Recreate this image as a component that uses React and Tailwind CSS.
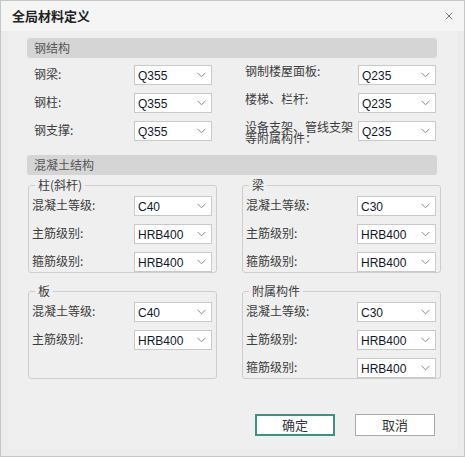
import { X } from "lucide-react"

const cjk = { fontFamily: '"Noto Sans CJK SC", "Noto Sans", sans-serif' }
const val = { fontFamily: '"Liberation Sans", "Noto Sans CJK SC", sans-serif' }

const Select = ({ value, w = "w-[78px]" }) => (
  <div className={`${w} h-[20px] bg-white border border-[#c9c9c9] flex items-center justify-between pl-[3px] pr-[5px] shrink-0`}>
    <span className="text-[12px] leading-none text-[#111827] pt-[2px]" style={val}>{value}</span>
    <svg width="9" height="6" viewBox="0 0 9 6" fill="none">
      <path d="M0.5 0.8 L4.5 4.8 L8.5 0.8" stroke="#8a8a8a" strokeWidth="1" />
    </svg>
  </div>
)

const Row = ({ label, value, lw, sw }) => (
  <div className="flex items-start h-[20px]">
    <div className={`${lw} text-[12px] leading-[15px] text-[#3c3c3c] pt-[1px]`}>{label}</div>
    <Select value={value} w={sw} />
  </div>
)

const SectionHeader = ({ title }) => (
  <div className="w-[410px] h-[20px] rounded-[3px] bg-[#d5d5d5] flex items-center pl-[7px] text-[12px] text-[#555]">
    {title}
  </div>
)

const Group = ({ title, rows, wide }) => (
  <fieldset
    className={`${wide ? "w-[199px]" : "w-[189px]"} border border-[#cdcdcd] rounded-[3px] pl-[3px] pr-[4px] pt-[4px] flex flex-col gap-[8px]`}
  >
    <legend className="ml-[3px] px-[3px] text-[12px] leading-[14px] h-[14px] text-[#3c3c3c]">{title}</legend>
    {rows.map(([l, v]) => (
      <Row key={l} label={l} value={v} lw={wide ? "w-[111px]" : "w-[102px]"} sw={wide ? "w-[79px]" : "w-[78px]"} />
    ))}
  </fieldset>
)

const steel = [
  ["钢梁:", "Q355", "钢制楼屋面板:", "Q235"],
  ["钢柱:", "Q355", "楼梯、栏杆:", "Q235"],
  ["钢支撑:", "Q355", "设备支架、管线支架等附属构件：", "Q235"],
]

export default function App() {
  return (
    <div className="w-[465px] h-[457px] border border-[#c6c6c6] bg-[#ececec] flex flex-col" style={cjk}>
      <div className="h-[30px] bg-[#f5f5f5] flex items-center justify-between pl-[11px] pr-[9px]">
        <span className="text-[13px] font-bold text-[#222]">全局材料定义</span>
        <X size={12} strokeWidth={1.8} color="#666" />
      </div>

      <div className="ml-[7px] w-[449px] h-[418px] bg-[#efefef] pt-[7px]">
        <div className="pl-[19px]">
          <SectionHeader title="钢结构" />
          <div className="pl-[7px] mt-[7px] flex flex-col gap-[8px]">
            {steel.map(([l1, v1, l2, v2]) => (
              <div key={l1} className="flex items-start h-[20px]">
                <div className="w-[100px] text-[12px] leading-[15px] text-[#3c3c3c] pt-[1px]">{l1}</div>
                <Select value={v1} />
                <div className="w-[112px] ml-[33px] mr-[1px] text-[12px] leading-[11px] text-[#3c3c3c] pt-0">{l2}</div>
                <Select value={v2} />
              </div>
            ))}
          </div>

          <div className="mt-[14px]">
            <SectionHeader title="混凝土结构" />
          </div>
        </div>

        <div className="pl-[20px] mt-[3px] flex gap-[25px]">
          <Group
            title="柱(斜杆)"
            rows={[["混凝土等级:", "C40"], ["主筋级别:", "HRB400"], ["箍筋级别:", "HRB400"]]}
          />
          <Group
            wide
            title="梁"
            rows={[["混凝土等级:", "C30"], ["主筋级别:", "HRB400"], ["箍筋级别:", "HRB400"]]}
          />
        </div>

        <div className="pl-[20px] mt-[11px] flex gap-[25px]">
          <Group title="板" rows={[["混凝土等级:", "C40"], ["主筋级别:", "HRB400"]]} />
          <Group
            wide
            title="附属构件"
            rows={[["混凝土等级:", "C30"], ["主筋级别:", "HRB400"], ["箍筋级别:", "HRB400"]]}
          />
        </div>

        <div className="flex justify-end gap-[20px] pr-[22px] mt-[35px]">
          <button className="w-[80px] h-[22px] bg-white border-2 border-[#3a9382] text-[13px] text-[#333] flex items-center justify-center">
            确定
          </button>
          <button className="w-[80px] h-[22px] bg-white border border-[#a8a8a8] text-[13px] text-[#333] flex items-center justify-center">
            取消
          </button>
        </div>
      </div>
    </div>
  )
}
